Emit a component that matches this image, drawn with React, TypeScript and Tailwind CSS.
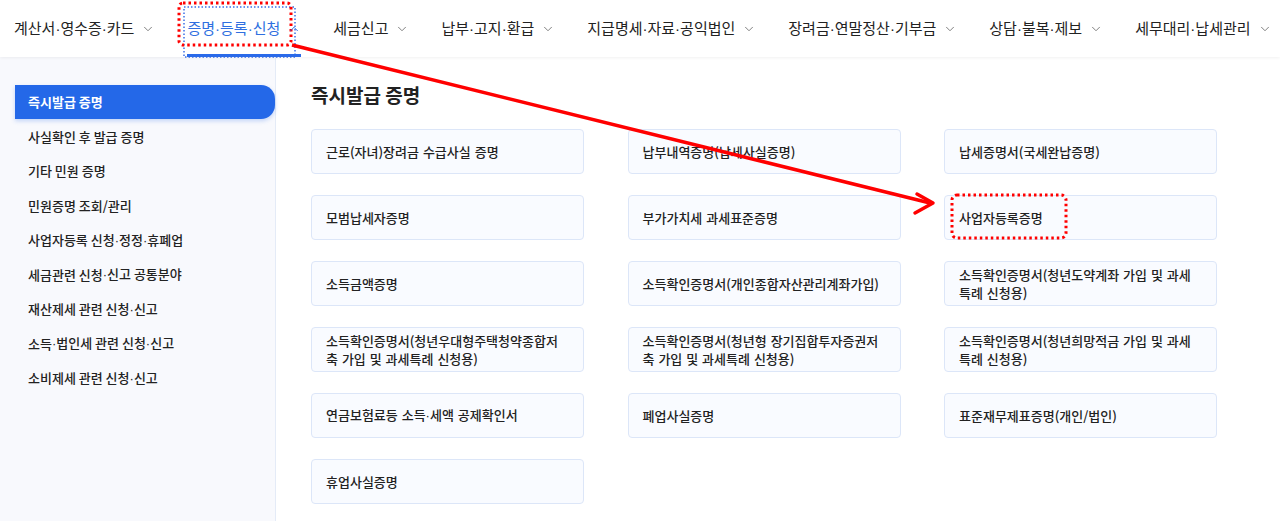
import { ChevronDown, ChevronUp } from "lucide-react";

const navItems = [
  "계산서·영수증·카드",
  "증명·등록·신청",
  "세금신고",
  "납부·고지·환급",
  "지급명세·자료·공익법인",
  "장려금·연말정산·기부금",
  "상담·불복·제보",
  "세무대리·납세관리",
];

const sideItems = [
  "즉시발급 증명",
  "사실확인 후 발급 증명",
  "기타 민원 증명",
  "민원증명 조회/관리",
  "사업자등록 신청·정정·휴폐업",
  "세금관련 신청·신고 공통분야",
  "재산제세 관련 신청·신고",
  "소득·법인세 관련 신청·신고",
  "소비제세 관련 신청·신고",
];

const cards = [
  "근로(자녀)장려금 수급사실 증명",
  "납부내역증명(납세사실증명)",
  "납세증명서(국세완납증명)",
  "모범납세자증명",
  "부가가치세 과세표준증명",
  "사업자등록증명",
  "소득금액증명",
  "소득확인증명서(개인종합자산관리계좌가입)",
  "소득확인증명서(청년도약계좌 가입 및 과세특례 신청용)",
  "소득확인증명서(청년우대형주택청약종합저축 가입 및 과세특례 신청용)",
  "소득확인증명서(청년형 장기집합투자증권저축 가입 및 과세특례 신청용)",
  "소득확인증명서(청년희망적금 가입 및 과세특례 신청용)",
  "연금보험료등 소득·세액 공제확인서",
  "폐업사실증명",
  "표준재무제표증명(개인/법인)",
  "휴업사실증명",
];

// the CJK font draws "·" full width, so take it from a latin font
const Label = ({ text }: { text: string }) => {
  const parts = text.split("·");
  return (
    <>
      {parts.map((p, i) => (
        <span key={i}>
          {i > 0 && <span className="font-['Liberation_Sans']">·</span>}
          {p}
        </span>
      ))}
    </>
  );
};

const Annotations = () => (
  <svg
    className="pointer-events-none absolute left-0 top-0"
    width={1280}
    height={521}
    viewBox="0 0 1280 521"
    fill="none"
  >
    <rect
      x={184}
      y={7}
      width={111}
      height={50}
      stroke="#3b6fe8"
      strokeWidth={1.5}
      strokeDasharray="1.5 2"
    />
    <rect
      x={179}
      y={3}
      width={112}
      height={42}
      rx={4}
      stroke="#ff0000"
      strokeWidth={3}
      strokeDasharray="2.5 3"
    />
    <line x1={292} y1={45} x2={930} y2={203} stroke="#ff0000" strokeWidth={3.5} />
    <path
      d="M917 194 L933 203 L915 213"
      stroke="#ff0000"
      strokeWidth={3.5}
      strokeLinecap="round"
      strokeLinejoin="round"
    />
    <rect
      x={952}
      y={195}
      width={114}
      height={43}
      rx={5}
      stroke="#ff0000"
      strokeWidth={3}
      strokeDasharray="2.5 3"
    />
  </svg>
);

export default function App() {
  return (
    <div
      className="relative h-[521px] w-[1280px] overflow-hidden bg-white text-[#222]"
      style={{ fontFamily: '"Noto Sans CJK KR", "Noto Sans", sans-serif' }}
    >
      <nav className="relative z-10 flex h-[57px] items-stretch gap-[32px] whitespace-nowrap pl-[14px] shadow-[0_1px_3px_rgba(0,0,0,0.06)]">
        {navItems.map((item, i) => {
          const active = i === 1;
          return (
            <div
              key={item}
              className={
                active
                  ? "flex items-center gap-[7px] border-b-[3px] border-[#2a6ae9] pt-[3px] text-[15px] text-[#2f6fe0]"
                  : "flex items-center gap-[7px] text-[15px] text-[#222]"
              }
            >
              <span>
                <Label text={item} />
              </span>
              {active ? (
                <ChevronUp size={14} strokeWidth={1.6} className="text-[#2f6fe0]" />
              ) : (
                <ChevronDown size={14} strokeWidth={1.6} className="text-[#777]" />
              )}
            </div>
          );
        })}
      </nav>

      <div className="flex h-[464px]">
        <aside className="w-[276px] shrink-0 border-r border-[#e4ebf7] bg-[#f8f9fd] pt-[28px]">
          {sideItems.map((item, i) =>
            i === 0 ? (
              <div
                key={item}
                className="ml-[15px] flex h-[34px] items-center rounded-r-[14px] bg-[#2468e8] pl-[13px] text-[13px] font-bold text-white shadow-[0_2px_4px_rgba(36,104,232,0.25)]"
              >
                {item}
              </div>
            ) : (
              <div
                key={item}
                className="ml-[15px] flex h-[34.5px] items-center pl-[13px] text-[13px] font-medium text-[#222]"
              >
                <Label text={item} />
              </div>
            )
          )}
        </aside>

        <main className="flex-1 pl-[35px] pt-[25px]">
          <h1 className="mb-[21px] text-[19px] font-bold leading-[26px] text-[#222]">즉시발급 증명</h1>
          <div className="grid grid-cols-[273px_273px_273px] gap-x-[43.5px] gap-y-[21px]">
            {cards.map((c) => (
              <div
                key={c}
                className="flex h-[45px] items-center rounded-[4px] border border-[#dce6f8] bg-[#f9fbff] pl-[14px] pr-[18px] text-[13px] font-medium leading-[18px] text-[#222] [word-spacing:1px]"
              >
                <span>
                  <Label text={c} />
                </span>
              </div>
            ))}
          </div>
        </main>
      </div>

      <Annotations />
    </div>
  );
}
